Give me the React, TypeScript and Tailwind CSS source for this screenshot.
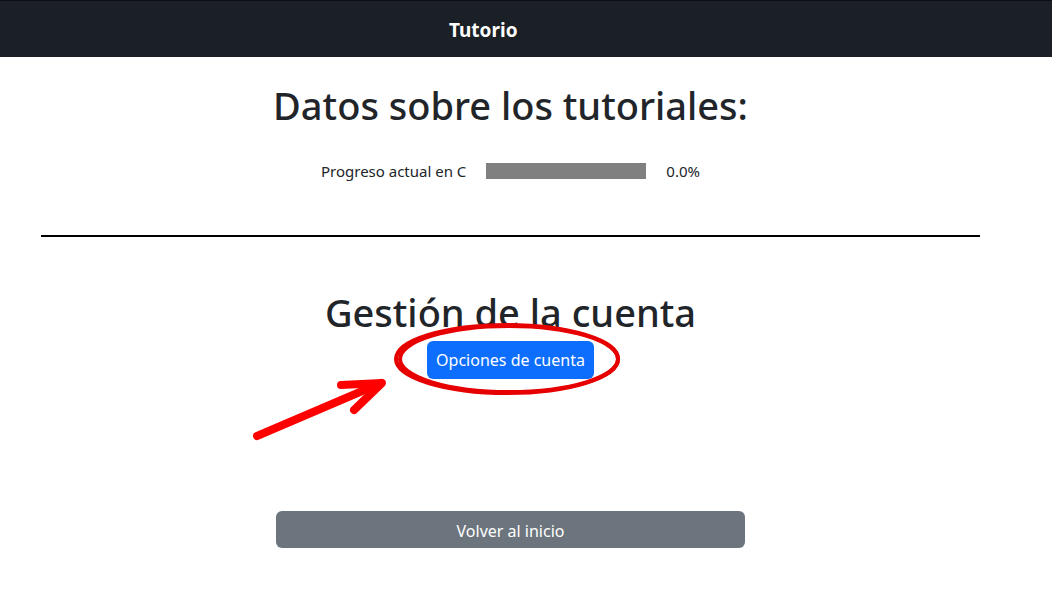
import React from "react";

const font = { fontFamily: '"Noto Sans", "Open Sans", sans-serif' };

const ProgressRow = ({ label, pct }: { label: string; pct: number }) => (
    <div className="flex items-center justify-center gap-5 text-[15px] text-[#212529]">
        <span>{label}</span>
        <div className="w-[160px] h-4 bg-[#808080]">
            <div className="h-full bg-[#0d6efd]" style={{ width: `${pct}%` }} />
        </div>
        <span>{pct.toFixed(1)}%</span>
    </div>
);

export default function App() {
    return (
        <div className="relative min-h-[592px] bg-white" style={font}>
            <nav className="h-[57px] bg-[#1b2027] border-t border-[#0e0f16] flex items-center pl-[449px]">
                <span className="text-white font-bold text-[19px] mt-[2px]">Tutorio</span>
            </nav>
            <div className="w-[1021px] px-[41px] flex flex-col items-center">
                <h1 className="mt-[26px] text-[38px] font-medium text-[#212529] leading-[1.2]">Datos sobre los tutoriales:</h1>
                <div className="mt-[31px]">
                    <ProgressRow label="Progreso actual en C" pct={0} />
                </div>
                <hr className="w-full mt-[53px] border-t-2 border-black" />
                <h2 className="mt-[53px] text-[38px] font-medium text-[#212529] leading-[1.2]">Gestión de la cuenta</h2>
                <button className="mt-[5px] w-[167px] bg-[#0d6efd] text-white text-[16px] h-[38px] rounded-md">Opciones de cuenta</button>
                <button className="mt-[132px] w-[469px] h-[37px] pt-[3px] bg-[#6c757d] text-white text-[16px] rounded-md">Volver al inicio</button>
            </div>
            <svg className="absolute left-0 top-0 pointer-events-none" width="1052" height="592">
                <g fill="none" stroke="#e60000">
                    <ellipse cx="507" cy="359" rx="111" ry="34" strokeWidth="4" />
                    <ellipse cx="509" cy="359" rx="109" ry="33" strokeWidth="4" />
                </g>
                <g stroke="#ff0000" strokeWidth="8" strokeLinecap="round" strokeLinejoin="round" fill="none">
                    <line x1="257" y1="436" x2="381" y2="383" />
                    <polyline points="341,385 382,383 354,410" />
                </g>
            </svg>
        </div>
    );
}
